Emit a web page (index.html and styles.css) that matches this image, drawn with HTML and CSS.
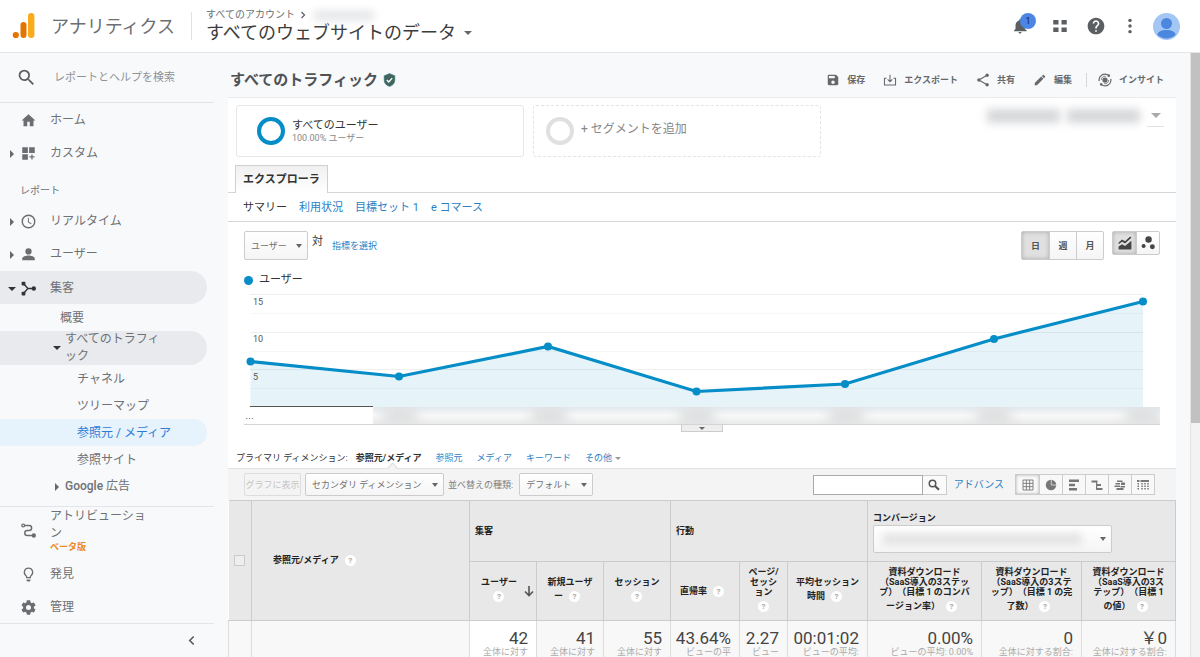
FILE: index.html
```html
<!DOCTYPE html>
<html lang="ja">
<head>
<meta charset="utf-8">
<title>アナリティクス</title>
<link rel="stylesheet" href="styles.css">
</head>
<body>
<header class="topbar">
  <svg class="logo" viewBox="0 0 24 26" aria-hidden="true"><rect x="16" y="0" width="6.400" height="25" rx="3.200" fill="#f9ab1c"/><rect x="8.500" y="9" width="6" height="16" rx="3" fill="#e37400"/><circle cx="3.800" cy="22" r="3.100" fill="#e37400"/></svg>
  <span class="brand">アナリティクス</span>
  <div class="account">
    <div class="crumbs">すべてのアカウント
      <svg class="crumb-arrow" viewBox="0 0 6 8" aria-hidden="true"><path d="M1.500 1l3 3-3 3" fill="none" stroke="#5f6368" stroke-width="1.300"/></svg>
      <span class="smudge crumb-smudge"></span>
    </div>
    <button class="view-name">すべてのウェブサイトのデータ<span class="caret"></span></button>
  </div>
  <nav class="top-icons" aria-label="アカウント">
    <button class="bell" aria-label="通知"><svg viewBox="0 0 24 24"><path d="M12 22c1.100 0 2-.9 2-2h-4c0 1.100.9 2 2 2zm6.500-6v-5c0-3.070-1.640-5.640-4.500-6.320V4c0-.83-.67-1.500-1.500-1.500S11 3.170 11 4v.68C8.130 5.360 6 7.920 6 11v5l-2 2v1h17v-1z"/></svg><span class="badge">1</span></button>
    <button aria-label="アプリ"><svg viewBox="0 0 24 24"><path d="M3 4h7v6H3zM14 4h7v6h-7zM3 14h7v6H3zM14 14h7v6h-7z"/></svg></button>
    <button aria-label="ヘルプ"><svg class="lg" viewBox="0 0 24 24"><path d="M12 2C6.480 2 2 6.480 2 12s4.480 10 10 10 10-4.480 10-10S17.520 2 12 2zm1 17h-2v-2h2v2zm2.070-7.750l-.9.920C13.450 12.900 13 13.500 13 15h-2v-.5c0-1.100.45-2.100 1.170-2.830l1.240-1.260c.37-.36.590-.86.590-1.410 0-1.100-.9-2-2-2s-2 .9-2 2H8c0-2.210 1.790-4 4-4s4 1.790 4 4c0 .88-.36 1.680-.93 2.250z"/></svg></button>
    <button aria-label="その他"><svg viewBox="0 0 24 24"><circle cx="12" cy="4.500" r="2.300"/><circle cx="12" cy="12" r="2.300"/><circle cx="12" cy="19.500" r="2.300"/></svg></button>
    <button aria-label="アカウント"><svg class="avatar" viewBox="0 0 27 27"><circle cx="13.500" cy="13.500" r="13.500" fill="#a3c6f5"/><circle cx="13.500" cy="10.500" r="5.500" fill="#4c87df"/><path d="M4.500 22c0-3.500 4-5 9-5s9 1.500 9 5a13.500 13.500 0 0 1-18 0z" fill="#4c87df"/></svg></button>
  </nav>
</header>

<div class="shell">
  <aside class="side">
    <label class="side-search">
      <svg viewBox="0 0 24 24" aria-hidden="true"><path d="M15.500 14h-.79l-.28-.27A6.470 6.470 0 0 0 16 9.500 6.500 6.500 0 1 0 9.500 16c1.610 0 3.090-.59 4.230-1.570l.27.280v.79l5 4.990L20.490 19l-4.990-5zm-6 0C7.010 14 5 11.990 5 9.500S7.010 5 9.500 5 14 7.010 14 9.500 11.990 14 9.500 14z"/></svg>
      <input type="search" placeholder="レポートとヘルプを検索">
    </label>
    <nav class="side-nav" aria-label="レポート">
      <a class="item" href="#"><span class="tw"></span><svg viewBox="0 0 24 24"><path d="M10 21v-7h4v7h6v-9h3L12 2 1 12h3v9z"/></svg>ホーム</a>
      <a class="item" href="#"><span class="tw right"></span><svg viewBox="0 0 24 24"><path d="M2 2h9v9H2zM13 2h9v9h-9zM2 13h9v9H2zM16.500 13.500h2v3h3v2h-3v3h-2v-3h-3v-2h3z"/></svg>カスタム</a>
      <div class="side-label">レポート</div>
      <a class="item" href="#"><span class="tw right"></span><svg viewBox="0 0 24 24"><circle cx="12" cy="12" r="10" fill="none" stroke="#6b6e71" stroke-width="2.300"/><path d="M11 6v7l5 3.500 1-1.500-4.400-2.800V6z"/></svg>リアルタイム</a>
      <a class="item" href="#"><span class="tw right"></span><svg viewBox="0 0 24 24"><circle cx="12" cy="7" r="5"/><path d="M2 21v-2.500C2 15 8 13.500 12 13.500s10 1.500 10 5V21z"/></svg>ユーザー</a>
      <a class="item open" href="#"><span class="tw down"></span><svg viewBox="0 0 24 24"><path d="M4 4l7 8-7 8M11 12h9" fill="none" stroke="#333" stroke-width="2.200"/><rect x="1" y="1" width="6" height="6" rx="1.500"/><rect x="1" y="17" width="6" height="6" rx="1.500"/><circle cx="20.500" cy="12" r="3.500"/></svg>集客</a>
      <a class="sub" href="#">概要</a>
      <a class="sub group open" href="#"><span class="tw down"></span>すべてのトラフィック</a>
      <a class="sub leaf" href="#">チャネル</a>
      <a class="sub leaf" href="#">ツリーマップ</a>
      <a class="sub leaf current" href="#">参照元 / メディア</a>
      <a class="sub leaf" href="#">参照サイト</a>
      <a class="sub group" href="#"><span class="tw right"></span><span><b>Google</b> 広告</span></a>
    </nav>
    <div class="side-foot">
      <a class="item attribution" href="#"><span class="tw"></span><svg viewBox="0 0 24 24"><path d="M4 4h9a4 4 0 0 1 0 8H10a4 4 0 0 0 0 8h10" fill="none" stroke="#6b6e71" stroke-width="2.300"/><circle cx="3.500" cy="4" r="2.300" fill="#f8f9fb" stroke="#6b6e71" stroke-width="2"/><circle cx="20.500" cy="20" r="3.500"/></svg><span class="two">アトリビューション<em>ベータ版</em></span></a>
      <a class="item" href="#"><span class="tw"></span><svg viewBox="0 0 24 24"><path d="M12 2a6.600 6.600 0 0 0-4 11.900c.7.600 1 1 1 1.700V17h6v-1.400c0-.7.300-1.100 1-1.700A6.600 6.600 0 0 0 12 2z" fill="none" stroke="#6b6e71" stroke-width="2"/><path d="M9 20h6v1a2 2 0 0 1-2 2h-2a2 2 0 0 1-2-2z"/></svg>発見</a>
      <a class="item" href="#"><span class="tw"></span><svg viewBox="1.500 1.500 21 21"><path d="M20.900 13a8 8 0 0 0 0-2l2.100-1.700c.2-.2.300-.5.100-.7l-2-3.500c-.1-.2-.4-.3-.6-.2l-2.500 1a7 7 0 0 0-1.700-1l-.4-2.600c0-.3-.2-.4-.5-.4h-4c-.3 0-.5.100-.5.400L10.500 5a7 7 0 0 0-1.700 1l-2.500-1c-.2-.1-.5 0-.6.200l-2 3.500c-.1.200-.1.500.1.600L5.900 11a8 8 0 0 0 0 2l-2.100 1.700c-.2.200-.2.400-.1.600l2 3.500c.1.200.4.300.6.200l2.500-1c.5.400 1.100.7 1.700 1l.4 2.600c0 .3.200.4.500.4h4c.3 0 .5-.1.500-.4l.4-2.600c.6-.3 1.200-.6 1.700-1l2.500 1c.2.100.5 0 .6-.2l2-3.500c.1-.2.100-.4-.1-.6zM13.400 15.500a3.500 3.500 0 1 1 0-7 3.500 3.500 0 0 1 0 7z" transform="translate(-1.400 0)"/></svg>管理</a>
      <button class="collapse" aria-label="閉じる"><svg viewBox="0 0 8 12"><path d="M6.500 1.500L2 6l4.500 4.500" fill="none" stroke="#55585c" stroke-width="1.800"/></svg></button>
    </div>
  </aside>

  <main class="main">
    <div class="report-head">
      <h1>すべてのトラフィック</h1>
      <svg class="shield" viewBox="0 0 24 26" aria-hidden="true"><path d="M12 1L2 5v8c0 6 4.300 10.500 10 12 5.700-1.500 10-6 10-12V5z" fill="#43655c" stroke="#3b8a9a" stroke-width="1"/><path d="M7 13l3.600 3.500L17 9.500" fill="none" stroke="#fff" stroke-width="2.600"/></svg>
      <div class="actions">
        <button><svg viewBox="0 0 24 24"><path d="M17 3H5a2 2 0 0 0-2 2v14c0 1.100.9 2 2 2h14c1.100 0 2-.9 2-2V7zm-5 16a3 3 0 1 1 0-6 3 3 0 0 1 0 6zm3-10H5V5h10z"/></svg>保存</button>
        <button><svg viewBox="0 0 24 24"><path d="M12 3v12M8 11l4 4 4-4M6 9H2.500v11.500h19V9H18" fill="none" stroke="#66696c" stroke-width="1.800"/></svg>エクスポート</button>
        <button><svg viewBox="0 0 24 24"><path d="M19 4L5 12l14 8" fill="none" stroke="#66696c" stroke-width="2"/><circle cx="19" cy="4" r="3"/><circle cx="5" cy="12" r="3"/><circle cx="19" cy="20" r="3"/></svg>共有</button>
        <button><svg viewBox="0 0 24 24"><path d="M3 17.250V21h3.750L17.810 9.940l-3.750-3.750zM20.710 7.040a1 1 0 0 0 0-1.410l-2.340-2.340a1 1 0 0 0-1.410 0l-1.830 1.830 3.750 3.750z"/></svg>編集</button>
        <button class="insight"><svg viewBox="0 0 24 24"><circle cx="12" cy="12" r="4.500"/><path d="M2 14a10 10 0 0 1 15-10.500M22 10A10 10 0 0 1 7 20.500" fill="none" stroke="#66696c" stroke-width="2"/><path d="M5.500 12a6.500 6.500 0 0 1 8-6.300M18.500 12a6.500 6.500 0 0 1-8 6.300" fill="none" stroke="#66696c" stroke-width="1.300"/><circle cx="18.500" cy="4.500" r="2.200"/><circle cx="5.500" cy="19.500" r="2.200"/></svg>インサイト</button>
      </div>
    </div>

    <div class="panel">
      <div class="segments">
        <div class="segment"><span class="ring"></span><div><div class="seg-name">すべてのユーザー</div><div class="seg-sub">100.00% ユーザー</div></div></div>
        <button class="segment add"><span class="ring"></span><span class="add-text">+ セグメントを追加</span></button>
        <button class="date" aria-label="期間"><span class="smudge date-smudge"></span><span class="smudge date-smudge"></span><span class="date-end"><span class="date-caret"></span></span></button>
      </div>
      <div class="tabs"><button class="tab">エクスプローラ</button></div>
      <nav class="subnav"><span>サマリー</span><a href="#">利用状況</a><a href="#">目標セット 1</a><a href="#">e コマース</a></nav>

      <div class="metric-row">
        <span class="pick metric"><select aria-label="指標"><option>ユーザー</option></select></span>
        <span class="versus">対</span>
        <a class="choose" href="#">指標を選択</a>
        <div class="grp period"><button class="on">日</button><button>週</button><button>月</button></div>
        <div class="grp kinds">
          <button class="on" aria-label="折れ線グラフ"><svg viewBox="0 0 24 24"><path d="M1 11l6-5 5 3 9-8 2 2-11 10-5-3-6 4zM1 18l6-4 5 3 11-9v15H1z"/></svg></button>
          <button aria-label="モーション グラフ"><svg viewBox="0 0 24 24"><circle cx="13" cy="6" r="5.500"/><circle cx="4.500" cy="17" r="3.500"/><circle cx="19.500" cy="18.500" r="4.200"/></svg></button>
        </div>
      </div>
      <div class="legend"><i></i>ユーザー</div>

      <div class="chart">
        <svg class="plot" viewBox="0 0 916 120" role="img" aria-label="ユーザー数の推移">
          <g stroke="#efefef"><path d="M6 7.500h893M6 45.500h893M6 82.500h893"/><path d="M6 26.500h893M6 64.500h893M6 101.500h893" stroke="#f7f7f7"/></g>
          <path d="M6.500 74.500L155 89.500 304 59.500 452.500 104.500 601 97 750 52 899 14.500V120H6.500z" fill="#058dc7" fill-opacity=".1"/>
          <path d="M6.500 74.500L155 89.500 304 59.500 452.500 104.500 601 97 750 52 899 14.500" fill="none" stroke="#058dc7" stroke-width="3.200"/>
          <g fill="#058dc7"><circle cx="6.500" cy="74.500" r="4"/><circle cx="155" cy="89.500" r="4"/><circle cx="304" cy="59.500" r="4"/><circle cx="452.500" cy="104.500" r="4"/><circle cx="601" cy="97" r="4"/><circle cx="750" cy="52" r="4"/><circle cx="899" cy="14.500" r="4"/></g>
          <path d="M6 119.500h123" stroke="#555"/>
          <g class="ticks"><text x="9" y="18">15</text><text x="9" y="55">10</text><text x="9" y="93">5</text></g>
        </svg>
        <div class="axis"><span class="dots">…</span><div class="haze"><i></i><i></i><i></i><i></i><i></i><i></i></div></div>
        <button class="drawer" aria-label="メモを開く"><span class="caret"></span></button>
      </div>

      <div class="dims"><span>プライマリ ディメンション:</span><strong>参照元/メディア</strong><a href="#">参照元</a><a href="#">メディア</a><a href="#">キーワード</a><a href="#">その他<span class="caret pale"></span></a></div>

      <div class="tools">
        <button class="plotrows" disabled>グラフに表示</button>
        <span class="pick secondary"><select aria-label="セカンダリ ディメンション"><option>セカンダリ ディメンション</option></select></span>
        <label for="sort">並べ替えの種類:</label>
        <span class="pick sort"><select id="sort"><option>デフォルト</option></select></span>
        <form class="find"><input type="text" aria-label="検索"><button type="button" aria-label="検索"><svg viewBox="0 0 24 24"><circle cx="9" cy="9" r="6.500" fill="none" stroke="#555" stroke-width="3"/><path d="M14 14l8 7.500" stroke="#555" stroke-width="4.500"/></svg></button></form>
        <a class="adv" href="#">アドバンス</a>
        <div class="views">
          <button class="on" aria-label="データ"><svg viewBox="0 0 24 24"><path d="M2 2h20v20H2zM2 8.700h20M2 15.300h20M8.700 2v20M15.300 2v20" fill="none" stroke="#777" stroke-width="1.800"/></svg></button>
          <button aria-label="割合"><svg viewBox="0 0 24 24"><circle cx="12" cy="12" r="10.500"/><path d="M12.500 1v11H23" fill="none" stroke="#eee" stroke-width="1.500"/></svg></button>
          <button aria-label="サマリー"><svg viewBox="0 0 24 24"><path d="M2 1h20v5H2zM2 9.500h12v5H2zM2 18h16v5H2z"/></svg></button>
          <button aria-label="比較"><svg viewBox="0 0 24 24"><path d="M1 3h12v4H1zM11 10h9v4h-9zM11 18h12v4H11zM10 3h2.500v19H10z"/></svg></button>
          <button aria-label="語句クラウド"><svg viewBox="0 0 24 24"><path d="M6 3h11v3H6zM3 8h9v3H3zM14 7h8v5h-8zM1 13h11v3H1zM13 14h9v3h-9zM5 18h14v4H5z"/></svg></button>
          <button aria-label="ピボット"><svg viewBox="0 0 24 24"><path d="M0 2h5v4H0zM7 2h17v4H7z"/><path d="M2.500 8v15M10 8v15M16 8v15M22 8v15" fill="none" stroke="#777" stroke-width="3" stroke-dasharray="3 2"/></svg></button>
        </div>
      </div>

      <table class="data">
        <colgroup><col class="c-check"><col><col class="c-67"><col class="c-67"><col class="c-67"><col class="c-69"><col class="c-48"><col class="c-80"><col class="c-114"><col class="c-100"><col class="c-94"></colgroup>
        <thead>
          <tr class="groups">
            <th rowspan="2"><input type="checkbox" aria-label="すべて選択"></th>
            <th rowspan="2" class="dim">参照元/メディア<span class="q">?</span></th>
            <th colspan="3" class="gname">集客</th>
            <th colspan="3" class="gname">行動</th>
            <th colspan="3" class="gname"><label for="goal">コンバージョン</label><span class="pick goal"><select id="goal"><option></option></select><span class="smudge goal-smudge"></span></span></th>
          </tr>
          <tr class="metrics">
            <th class="sorted">ユーザー<br><span class="q">?</span><svg class="desc" viewBox="0 0 10 11"><path d="M5 0v9M1 5.500l4 4 4-4" fill="none" stroke="#555" stroke-width="1.600"/></svg></th>
            <th>新規ユーザ<br>ー<span class="q">?</span></th>
            <th>セッション<br><span class="q">?</span></th>
            <th>直帰率<span class="q">?</span></th>
            <th>ページ/<br>セッシ<br>ョン<br><span class="q">?</span></th>
            <th>平均セッション<br>時間<span class="q">?</span></th>
            <th>資料ダウンロード<br>（SaaS導入の3ステッ<br>プ）（目標 1 のコンバ<br>ージョン率）<span class="q">?</span></th>
            <th>資料ダウンロード<br>（SaaS導入の3ステ<br>ップ）（目標 1 の完<br>了数）<span class="q">?</span></th>
            <th>資料ダウンロード<br>（SaaS導入の3ス<br>テップ）（目標 1<br>の値）<span class="q">?</span></th>
          </tr>
        </thead>
        <tbody>
          <tr>
            <td></td><td></td>
            <td class="sorted"><b>42</b>全体に対す</td>
            <td><b>41</b>全体に対す</td>
            <td><b>55</b>全体に対す</td>
            <td><b>43.64%</b>ビューの平</td>
            <td><b>2.27</b>ビュー</td>
            <td><b>00:01:02</b>ビューの平均:</td>
            <td><b>0.00%</b>ビューの平均: 0.00%</td>
            <td><b>0</b>全体に対する割合:</td>
            <td><b>￥0</b>全体に対する割合:</td>
          </tr>
        </tbody>
      </table>
    </div>
  </main>
  <div class="scroll"><div class="thumb"></div></div>
</div>
</body>
</html>
```

FILE: styles.css
```css
* { box-sizing: border-box; }
body {
  margin: 0;
  height: 100vh;
  overflow: hidden;
  display: flex;
  flex-direction: column;
  background: #f8f9fb;
  color: #333;
  font-family: Roboto, "Noto Sans CJK JP", sans-serif;
  font-size: 9px;
  line-height: 14px;
  text-spacing-trim: space-all;
}
button, input, select { font: inherit; color: inherit; margin: 0; }
button { background: none; border: 0; padding: 0; }
a { color: #2a7fc4; text-decoration: none; }
svg { display: block; flex: none; fill: #5c5f62; }

.caret, .date-caret {
  display: inline-block;
  border: 4px solid transparent;
  border-top-color: #66696c;
  border-bottom: 0;
}
.smudge { display: block; background: #c9cbce; filter: blur(4px); }

/* Top bar */
.topbar {
  flex: none;
  height: 53px;
  display: flex;
  align-items: center;
  padding: 0 20px 0 12px;
  background: #fff;
  border-bottom: 1px solid #e3e5e8;
}
.logo { width: 24px; height: 26px; }
.brand { margin-left: 15px; padding-top: 1px; font-size: 18px; line-height: 28px; color: #6b6e72; }
.account { margin-left: 16px; padding-left: 14px; border-left: 1px solid #e0e2e5; height: 28px; display: flex; flex-direction: column; justify-content: center; }
.crumbs { display: flex; align-items: center; gap: 5px; font-size: 10px; line-height: 14px; color: #6b6e72; }
.crumb-arrow { width: 6px; height: 8px; }
.crumb-smudge { width: 60px; height: 9px; margin-left: 3px; background: #e2e3e5; }
.view-name { display: flex; align-items: center; gap: 8px; font-size: 18px; line-height: 22px; color: #3c3c3c; }
.top-icons { margin-left: auto; display: flex; align-items: center; }
.top-icons button { width: 35px; display: flex; justify-content: center; }
.top-icons button:nth-child(n+2) { width: 36px; }
.top-icons button:nth-child(4) { width: 32px; }
.top-icons button:last-child { width: 27px; margin-left: 7px; }
.top-icons svg { width: 18px; height: 18px; }
.top-icons .lg { width: 20px; height: 20px; }
.top-icons .avatar { width: 27px; height: 27px; }
.top-icons .bell { position: relative; margin-right: 5px; }
.badge {
  position: absolute;
  top: -4px;
  left: 18px;
  width: 16px;
  height: 16px;
  border-radius: 50%;
  background: #4c86e4;
  color: #14233c;
  font-size: 9px;
  line-height: 16px;
  text-align: center;
}

.shell { flex: 1; min-height: 0; display: flex; }

/* Sidebar */
.side { flex: none; width: 214px; display: flex; flex-direction: column; color: #6e7175; font-size: 12px; }
.side a { color: inherit; }
.side-search { flex: none; height: 50px; display: flex; align-items: center; padding-left: 16px; border-bottom: 1px solid #e3e5e8; }
.side-search svg { width: 21px; height: 21px; }
.side-search input { flex: 1; min-width: 0; margin-left: 17px; padding: 1px 0 0; border: 0; background: none; font-size: 11px; outline: 0; }
.side-search input::placeholder { color: #8f9296; opacity: 1; }
.side-nav { flex: 1; min-height: 0; overflow: hidden; padding-right: 7px; }
.item { display: flex; align-items: center; min-height: 33px; padding-top: 2px; line-height: 17px; }
.item svg { width: 15px; height: 15px; margin-right: 14px; fill: #6b6e71; }
.tw { flex: none; width: 21px; display: flex; justify-content: center; }
.item .tw { padding-left: 2px; }
.tw.right::before { content: ""; border: 4px solid transparent; border-left-color: #66696c; border-right: 0; }
.tw.down::before { content: ""; border: 4px solid transparent; border-top-color: #333; border-bottom: 0; }
.side-label { height: 35px; padding: 15px 0 0 20px; font-size: 10px; line-height: 14px; }
.open { background: #e8eaed; border-radius: 0 17px 17px 0; }
.item.open { margin-top: 1px; }
.item.open svg { fill: #333; }
.sub { display: flex; align-items: center; min-height: 27px; padding: 2px 0 0 60px; line-height: 17px; }
.sub.group { padding: 0 42px 0 49px; }
.sub.group .tw { width: 16px; }
.sub.group b { font-weight: 500; }
.sub.leaf { padding-left: 77px; }
.side .current { color: #2b7cd8; background: #e6f2fc; border-radius: 0 14px 14px 0; }
.side-foot { flex: none; border-top: 1px solid #e3e5e8; }
.attribution { height: 50px; padding: 0 60px 3px 0; }
.two em { display: block; font-size: 9px; line-height: 11px; font-style: normal; font-weight: 700; color: #ef8a1d; }
.collapse { width: 100%; height: 34px; border-top: 1px solid #e3e5e8; display: flex; justify-content: flex-end; align-items: center; padding-right: 19px; }
.collapse svg { width: 7px; height: 11px; }

/* Report */
.main { flex: 1; min-width: 0; overflow: hidden; padding: 0 14px; }
.report-head { height: 45px; display: flex; align-items: center; padding: 10px 12px 0 2px; border-bottom: 1px solid #e9ebed; }
h1 { margin: 0; font-size: 15px; line-height: 22px; font-weight: 700; color: #505356; }
.shield { width: 13px; height: 14px; margin-left: 5px; }
.actions { margin-left: auto; display: flex; align-items: center; }
.actions button { display: flex; align-items: center; gap: 7px; margin-left: 18px; font-weight: 700; color: #66696c; }
.actions svg { width: 14px; height: 14px; fill: #66696c; }
.actions .insight { margin-left: 14px; padding-left: 11px; border-left: 1px solid #d5d7da; }
.panel { background: #fff; }

.segments { display: flex; gap: 9px; padding: 7px 7px 8px 8px; }
.segment { width: 288px; height: 52px; display: flex; align-items: center; gap: 7px; padding-left: 20px; border: 1px solid #e6e6e6; border-radius: 3px; }
.ring { flex: none; width: 28px; height: 28px; border: 4px solid #058dc7; border-radius: 50%; }
.seg-name { font-size: 11px; line-height: 14px; color: #333; }
.seg-sub { line-height: 11px; color: #888; }
.segment.add { border: 1px dashed #e4e4e4; padding: 0 0 0 12px; font-size: 12px; color: #888; }
.add-text { padding-bottom: 4px; }
.add .ring { border-color: #e0e0e0; }
.date { margin-left: auto; align-self: flex-start; display: flex; align-items: center; gap: 7px; height: 22px; padding-right: 5px; }
.date-smudge { width: 73px; height: 14px; background: #d5d7d9; }
.date-end { align-self: stretch; display: flex; align-items: center; width: 17px; justify-content: center; border-bottom: 1px solid #e2e2e2; }
.date-caret { border-width: 5px 5px 0; border-top-color: #aaa; }

.tabs { display: flex; padding-left: 7px; border-bottom: 1px solid #d6d6d6; }
.tab { height: 28px; margin-bottom: -1px; padding: 0 7px; border: 1px solid #d0d0d0; border-bottom: 0; background: linear-gradient(#f0f0f0, #fff); font-size: 11px; font-weight: 700; color: #333; }
.subnav { display: flex; gap: 12px; height: 29px; align-items: center; padding: 1px 0 0 15px; border-bottom: 1px solid #d6d6d6; font-size: 11px; }

.metric-row { display: flex; align-items: flex-start; padding: 9px 16px 0; }
.pick { position: relative; display: inline-flex; }
.pick select { width: 100%; appearance: none; border: 1px solid #ccc; border-radius: 2px; background: linear-gradient(#fff, #f5f5f5); padding: 0 20px 0 6px; color: #707070; line-height: 14px; }
.pick::after { content: ""; position: absolute; right: 6px; top: calc(50% - 2px); border: 3px solid transparent; border-top: 4px solid #666; border-bottom: 0; pointer-events: none; }
.metric select { height: 29px; }
.metric { width: 64px; }
.versus { margin: 4px 9px 0 4px; font-size: 11px; }
.choose { margin-top: 8px; }
.grp { display: flex; border: 1px solid #ccc; border-radius: 2px; background: linear-gradient(#fff, #f5f5f5); }
.grp button { display: flex; align-items: center; justify-content: center; font-weight: 700; color: #555; }
.grp button + button { border-left: 1px solid #ccc; }
.grp .on { background: #e0e0e0; box-shadow: inset 0 0 4px #aaa; }
.period { margin-left: auto; }
.period button { width: 27px; height: 27px; }
.period button + button { width: 27px; }
.kinds { margin-left: 8px; }
.kinds button { width: 23px; height: 22px; }
.kinds svg { width: 14px; height: 14px; fill: #444; }
.legend { display: flex; align-items: center; gap: 6px; height: 27px; padding: 13px 16px 0; font-size: 11px; }
.legend i { width: 9px; height: 9px; border-radius: 50%; background: #058dc7; }

.chart { padding: 0 16px; }
.plot { width: 100%; }
.ticks text { fill: #555; font-size: 9px; }
.axis { display: flex; height: 18px; border-bottom: 1px solid #d4d4d4; }
.dots { flex: none; width: 129px; padding: 2px 0 0 1px; font-family: "Liberation Sans", sans-serif; color: #555; }
.haze { flex: 1; display: flex; justify-content: space-between; padding: 1px 0 0 10px; background: linear-gradient(#e3e9ed, #f7f8f9 50%, #eaeaea); overflow: hidden; }
.haze i { width: 34px; background: #dcddde; filter: blur(6px); }
.drawer { display: flex; justify-content: center; align-items: center; width: 42px; height: 7px; margin: 0 auto; border: 1px solid #ccc; border-top: 0; background: #eee; }
.drawer .caret { border-width: 3px 3px 0; }

.dims { display: flex; align-items: center; gap: 14px; height: 37px; padding: 16px 8px 0; border-bottom: 1px solid #e2e2e2; }
.dims strong { position: relative; margin-left: -6px; }
.dims strong::after { content: ""; position: absolute; left: 50%; bottom: -6px; width: 6px; height: 6px; border: 1px solid #ddd; border-width: 1px 0 0 1px; background: #f4f4f4; transform: rotate(45deg); }
.pale { margin-left: 3px; border-width: 3px 3px 0; border-top-color: #999; vertical-align: middle; }

.tools { display: flex; align-items: center; height: 31px; padding: 0 21px 0 16px; background: #f4f4f4; color: #808080; }
.plotrows { height: 23px; width: 57px; border: 1px solid #ddd; border-radius: 2px; color: #c4c4c4; white-space: nowrap; overflow: hidden; }
.tools select { height: 23px; }
.secondary { width: 139px; margin: 0 4px; }
.sort { width: 74px; margin-left: 6px; }
.find { display: flex; margin-left: auto; height: 20px; }
.find input { width: 110px; border: 1px solid #aaa; background: #fff; padding: 0 4px; }
.find button { width: 24px; display: flex; align-items: center; justify-content: center; border: 1px solid #ccc; border-left: 0; background: #fafafa; }
.find svg { width: 12px; height: 12px; }
.adv { margin: 0 11px 0 7px; font-size: 10px; }
.views { display: flex; border: 1px solid #ccc; }
.views button { width: 23px; height: 19px; display: flex; align-items: center; justify-content: center; background: #f8f8f8; }
.views button + button { border-left: 1px solid #ccc; }
.views .on { box-shadow: inset 0 0 3px #aaa; }
.views svg { width: 12px; height: 12px; fill: #777; }

/* Data table */
.data { width: 100%; table-layout: fixed; border-collapse: collapse; }
.c-check { width: 23px; }
.c-67 { width: 67px; }
.c-69 { width: 69px; }
.c-48 { width: 48px; }
.c-80 { width: 80px; }
.c-114 { width: 114px; }
.c-100 { width: 100px; }
.c-94 { width: 94px; }
.data th { padding: 0; border: 1px solid #ccc; background: #e8e8e8; line-height: 10px; color: #222; white-space: nowrap; }
.data th:first-child { border-left: 0; }
.groups { height: 61px; }
.metrics { height: 59px; }
.data .gname { padding: 0 5px; text-align: left; }
.data .dim { padding-left: 21px; text-align: left; }
.gname label { display: block; padding-top: 2px; line-height: 14px; }
.data input { appearance: none; display: block; width: 11px; height: 11px; margin: 0 auto; border: 1px solid #cacaca; background: #eee; }
.goal { width: 239px; }
.goal select { height: 28px; }
.goal-smudge { position: absolute; left: 10px; right: 30px; top: 9px; height: 10px; background: #e0e0e0; pointer-events: none; }
.q { display: inline-block; width: 11px; height: 11px; margin: 4px 6px; border-radius: 50%; background: #fff; color: #aaa; font-size: 8px; line-height: 11px; text-align: center; vertical-align: middle; }
.data .metrics .sorted { position: relative; padding-right: 8px; }
.desc { position: absolute; right: 2px; top: 24px; width: 10px; height: 11px; }
.data td { height: 56px; padding: 9px 8px 0 0; border: 1px solid #ddd; background: #f8f8f8; text-align: right; vertical-align: top; line-height: 11px; color: #aaa; white-space: nowrap; }
.data td.sorted { background: #fff; }
.data td b { display: block; font-size: 17px; line-height: 17px; font-weight: 400; color: #444; }

.scroll { flex: none; width: 10px; background: #f3f3f3; border-left: 1px solid #e4e4e4; }
.thumb { height: 370px; max-height: 70%; background: #c1c1c1; }
```
